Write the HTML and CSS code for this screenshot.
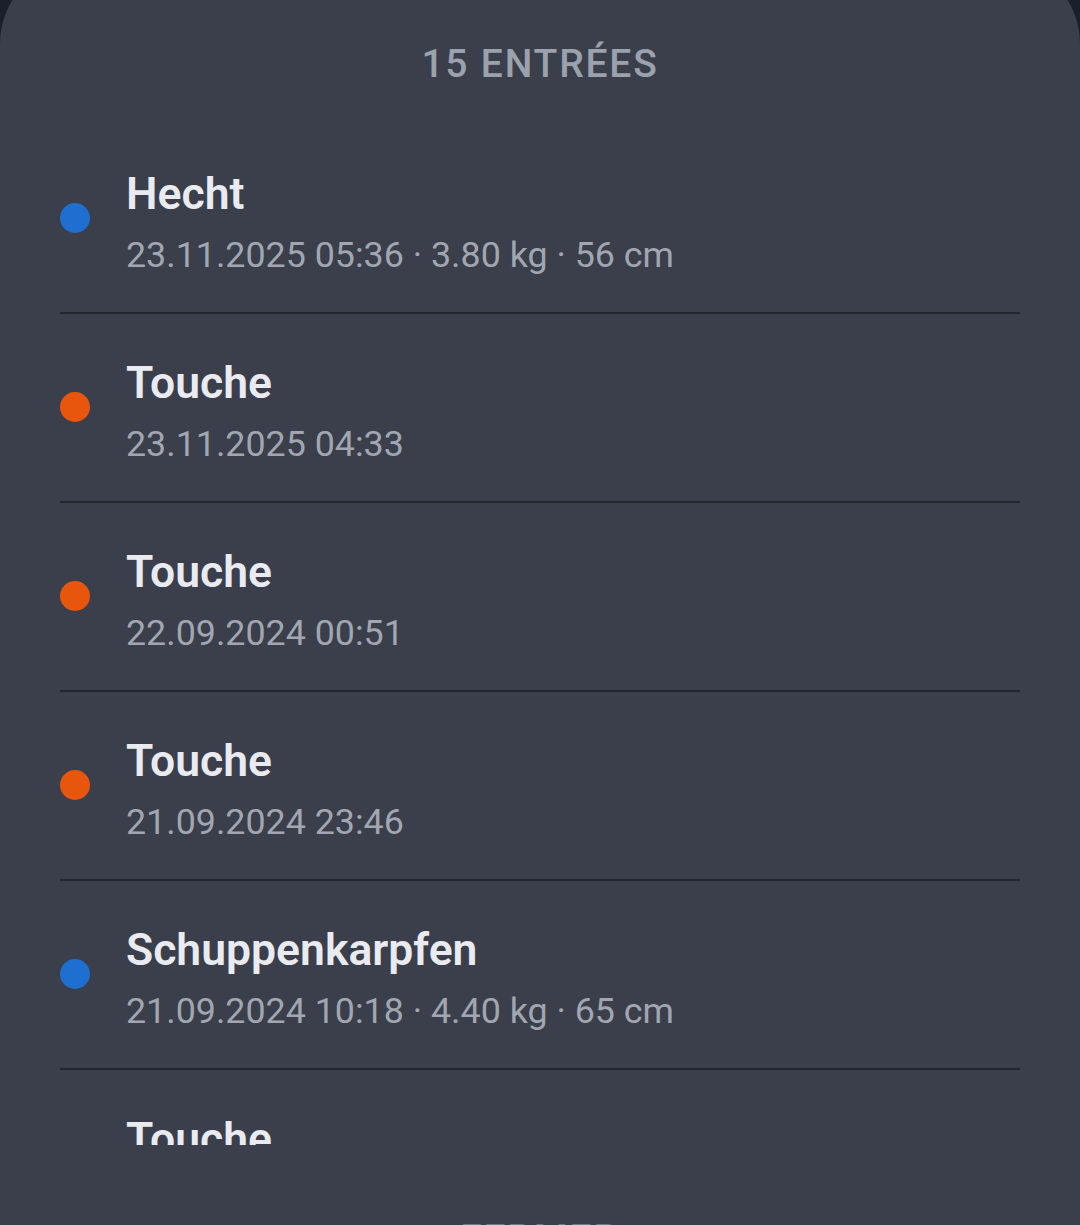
FILE: index.html
```html
<!DOCTYPE html>
<html lang="fr">
<head>
    <meta charset="UTF-8">
    <meta name="viewport" content="width=device-width, initial-scale=1.0">
    <title>Entrées</title>
    <link rel="stylesheet" href="styles.css">
</head>
<body>

    <div class="sheet">
        <h2 class="sheet-title">15 Entrées</h2>

        <div class="entry-list">
            <div class="entry">
                <span class="dot catch"></span>
                <div class="entry-text">
                    <div class="entry-name">Hecht</div>
                    <div class="entry-meta">23.11.2025 05:36 · 3.80 kg · 56 cm</div>
                </div>
            </div>
            <div class="entry">
                <span class="dot bite"></span>
                <div class="entry-text">
                    <div class="entry-name">Touche</div>
                    <div class="entry-meta">23.11.2025 04:33</div>
                </div>
            </div>
            <div class="entry">
                <span class="dot bite"></span>
                <div class="entry-text">
                    <div class="entry-name">Touche</div>
                    <div class="entry-meta">22.09.2024 00:51</div>
                </div>
            </div>
            <div class="entry">
                <span class="dot bite"></span>
                <div class="entry-text">
                    <div class="entry-name">Touche</div>
                    <div class="entry-meta">21.09.2024 23:46</div>
                </div>
            </div>
            <div class="entry">
                <span class="dot catch"></span>
                <div class="entry-text">
                    <div class="entry-name">Schuppenkarpfen</div>
                    <div class="entry-meta">21.09.2024 10:18 · 4.40 kg · 65 cm</div>
                </div>
            </div>
            <div class="entry">
                <span class="dot bite"></span>
                <div class="entry-text">
                    <div class="entry-name">Touche</div>
                    <div class="entry-meta">21.09.2024 22:10</div>
                </div>
            </div>
        </div>

        <h2 class="sheet-title footer-title">Fermer</h2>
    </div>

</body>
</html>
```

FILE: styles.css
```css
body {
    margin: 0;
    padding: 0;
    background-color: #1b1e2b;
    font-family: Roboto, "Liberation Sans", sans-serif;
    overflow: hidden;
}

.sheet {
    margin-top: -40px;
    padding-top: 80px;
    min-height: 1300px;
    background-color: #3a3f4b;
    border-radius: 84px 84px 0 0;
}

.sheet-title {
    margin: 0;
    text-align: center;
    font-size: 39px;
    line-height: 48px;
    font-weight: 500;
    letter-spacing: 1.8px;
    text-transform: uppercase;
    color: #9ba1ad;
}

.entry-list {
    margin: 37px 60px 0 60px;
    height: 1020px;
    overflow: hidden;
}

.entry {
    display: flex;
    align-items: flex-start;
    padding: 41px 0 30px;
    border-bottom: 2px solid #23262e;
}

.dot {
    flex: none;
    width: 30px;
    height: 30px;
    margin-top: 37px;
    margin-right: 36px;
    border-radius: 50%;
}
.catch { background-color: #1f6fd1; } /* Blue */
.bite { background-color: #e8560d; } /* Orange */

.entry-name {
    font-size: 44.5px;
    line-height: 56px;
    font-weight: 600;
    color: #e9ebf0;
}

.entry-meta {
    margin-top: 6px;
    font-size: 35.8px;
    line-height: 54px;
    color: #a1a6b1;
}

.footer-title {
    margin-top: 70px;
    color: #737987;
}
```
